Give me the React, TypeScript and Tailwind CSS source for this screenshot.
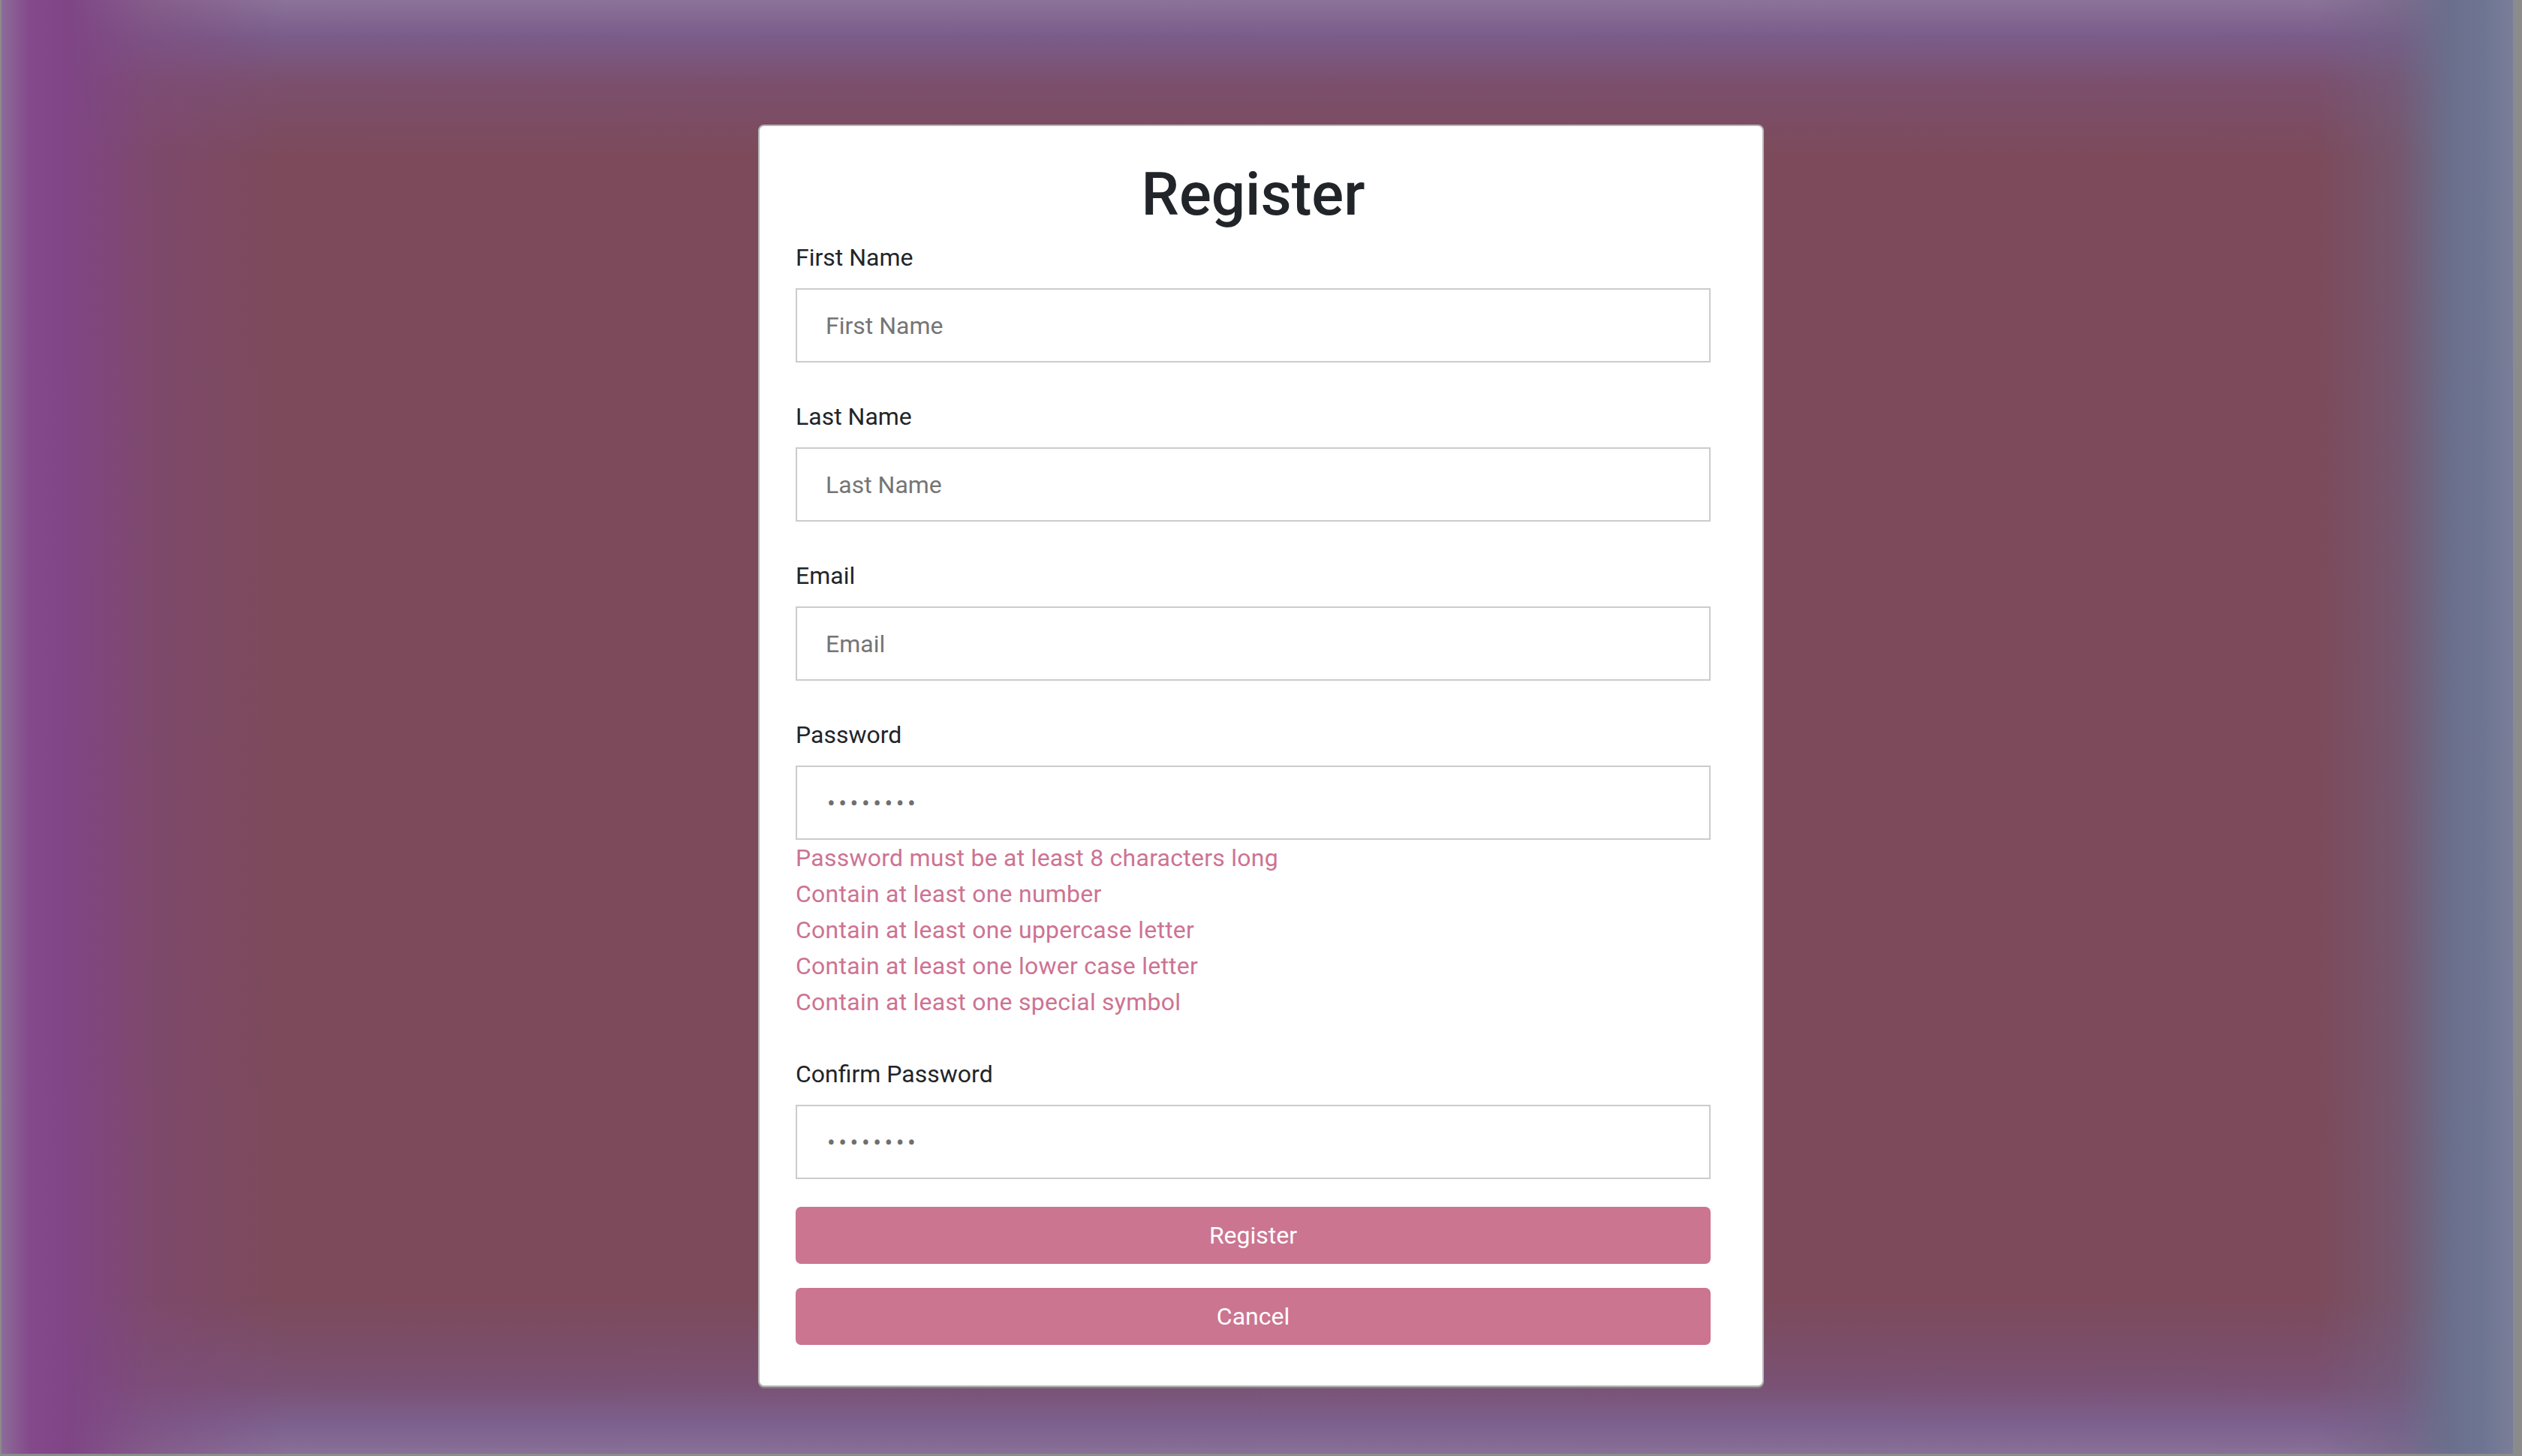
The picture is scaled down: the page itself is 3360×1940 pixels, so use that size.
import { useState } from "react"

const passwordRules = [
  "Password must be at least 8 characters long",
  "Contain at least one number",
  "Contain at least one uppercase letter",
  "Contain at least one lower case letter",
  "Contain at least one special symbol",
]

function Field({ label, type = "text", placeholder, value, onChange }: {
  label: string
  type?: string
  placeholder?: string
  value: string
  onChange: (v: string) => void
}) {
  return (
    <div className="flex flex-col">
      <label className="mb-[17px] text-[32px] leading-[48px] text-[#212529]">{label}</label>
      <input type={type} value={value} placeholder={placeholder} onChange={e => onChange(e.target.value)}
        className={type === "password"
          ? "h-[99px] w-full border-2 border-[#cccccc] bg-white pl-[40px] pr-[24px] text-[32px] text-[#6f6f6f] tracking-[4.5px] focus:outline-none"
          : "h-[99px] w-full border-2 border-[#cccccc] bg-white pl-[38px] pr-[24px] text-[32px] text-[#212529] placeholder:text-[#757575] focus:outline-none"} />
    </div>
  )
}

export default function App() {
  const [firstName, setFirstName] = useState("")
  const [lastName, setLastName]   = useState("")
  const [email, setEmail]         = useState("")
  const [password, setPassword]   = useState("12345678")
  const [confirm, setConfirm]     = useState("12345678")

  return (
    <div className="flex min-h-[1940px] w-full justify-center bg-[#7c4a5a] bg-[linear-gradient(to_right,#8d6d99_0px,#84498b_40px,#7f4585_90px,rgba(127,72,125,0.5)_200px,rgba(124,74,90,0)_380px),linear-gradient(to_left,#7b7e99_12px,#6e7592_50px,#6a6f8c_95px,rgba(110,100,130,0.5)_165px,rgba(124,74,90,0)_275px),linear-gradient(to_bottom,#8b7399_0px,#7a5c8a_50px,rgba(122,85,128,0.5)_110px,rgba(124,74,90,0)_210px),linear-gradient(to_top,#887096_3px,#7d618f_40px,rgba(120,86,133,0.6)_95px,rgba(124,74,90,0)_210px)] pt-[166px] font-['Roboto',sans-serif] shadow-[inset_2px_0_0_#8b8b8b,inset_-12px_0_0_#8b8b8b,inset_0_-3px_0_#8b8b8b]">
      <form onSubmit={e => e.preventDefault()}
        className="flex h-fit w-[1340px] flex-col rounded-[8px] border-2 border-[#b5b5b5] bg-white pt-[43px] pb-[54px] pl-[48px] pr-[69px] shadow-[0_2px_0_#7d7d7d]">
        <h1 className="mb-[12px] text-center text-[80px] font-medium leading-[96px] text-[#212529]">Register</h1>

        <div className="flex flex-col gap-[48px]">
          <Field label="First Name" placeholder="First Name" value={firstName} onChange={setFirstName} />
          <Field label="Last Name" placeholder="Last Name" value={lastName} onChange={setLastName} />
          <Field label="Email" type="email" placeholder="Email" value={email} onChange={setEmail} />
          <div className="flex flex-col">
            <Field label="Password" type="password" value={password} onChange={setPassword} />
            <ul className="flex flex-col text-[32px] leading-[48px] tracking-[0.25px] text-[#cd7393]">
              {passwordRules.map(rule => <li key={rule}>{rule}</li>)}
            </ul>
          </div>
          <Field label="Confirm Password" type="password" value={confirm} onChange={setConfirm} />
        </div>

        <button type="submit"
          className="mt-[37px] h-[76px] w-full rounded-[7px] bg-[#cb7591] text-[32px] text-white hover:bg-[#b9627f]">
          Register
        </button>
        <button type="button"
          className="mt-[32px] h-[76px] w-full rounded-[7px] bg-[#cb7591] text-[32px] text-white hover:bg-[#b9627f]">
          Cancel
        </button>
      </form>
    </div>
  )
}
